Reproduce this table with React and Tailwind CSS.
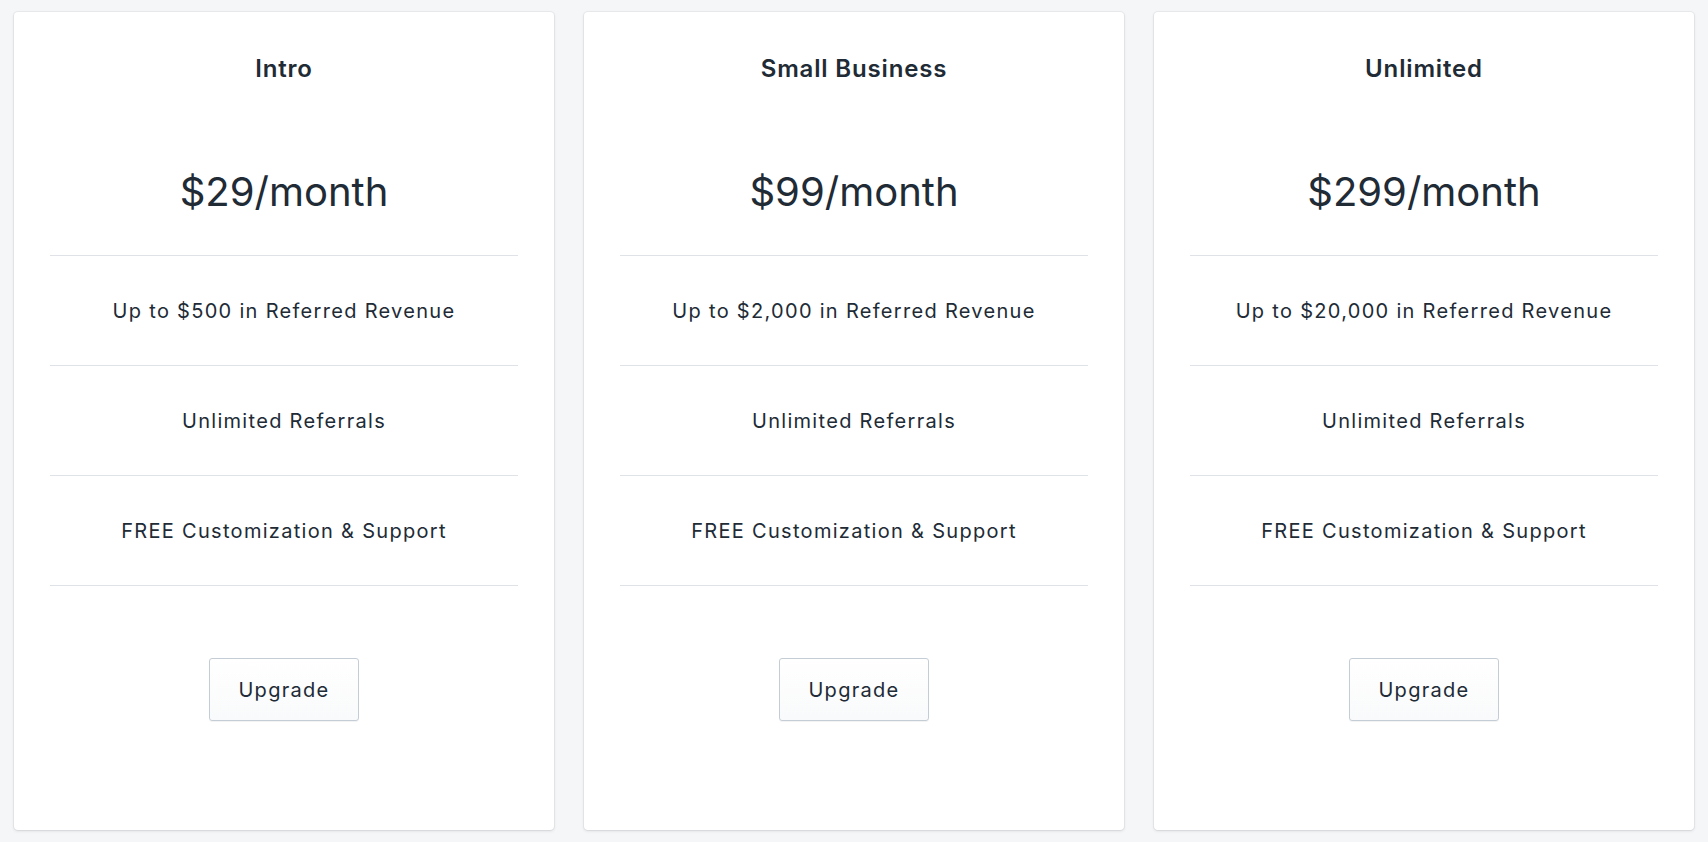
import React from "react";

const plans = [
  { name: "Intro", price: "$29/month", revenue: "Up to $500 in Referred Revenue" },
  { name: "Small Business", price: "$99/month", revenue: "Up to $2,000 in Referred Revenue" },
  { name: "Unlimited", price: "$299/month", revenue: "Up to $20,000 in Referred Revenue" },
];

function Card({ plan }) {
  return (
    <div className="flex h-[818px] flex-col rounded-[4px] bg-white px-[36px] text-[#212b36] shadow-[0_0_0_1px_rgba(63,63,68,0.05),0_1px_3px_0_rgba(63,63,68,0.15)]">
      <div className="flex flex-col items-center pt-[41px] pb-[39px]">
        <div className="h-8 text-[24px] font-semibold leading-8 tracking-[0.035em]">{plan.name}</div>
        <div className="mt-[83px] text-[40px] leading-[48px]">{plan.price}</div>
      </div>
      <div className="flex h-[110px] items-center justify-center border-t border-[#dfe3e8] text-[20px] tracking-[0.065em]">
        {plan.revenue}
      </div>
      <div className="flex h-[110px] items-center justify-center border-t border-[#dfe3e8] text-[20px] tracking-[0.065em]">
        Unlimited Referrals
      </div>
      <div className="flex h-[111px] items-center justify-center border-y border-[#dfe3e8] text-[20px] tracking-[0.065em]">
        FREE Customization &amp; Support
      </div>
      <div className="flex justify-center pt-[72px]">
        <button className="h-[63px] w-[150px] rounded-[3px] border border-[#c4cdd5] bg-gradient-to-b from-white to-[#f9fafb] text-[20px] tracking-[0.065em] text-[#212b36] shadow-[0_1px_0_0_rgba(22,29,37,0.05)]">
          Upgrade
        </button>
      </div>
    </div>
  );
}

export default function App() {
  return (
    <div
      className="min-h-[842px] w-full bg-[#f4f6f8] px-[14px] py-3"
      style={{ fontFamily: "Inter, 'Noto Sans', sans-serif" }}
    >
      <div className="grid grid-cols-3 gap-[30px]">
        {plans.map((p) => (
          <Card key={p.name} plan={p} />
        ))}
      </div>
    </div>
  );
}
